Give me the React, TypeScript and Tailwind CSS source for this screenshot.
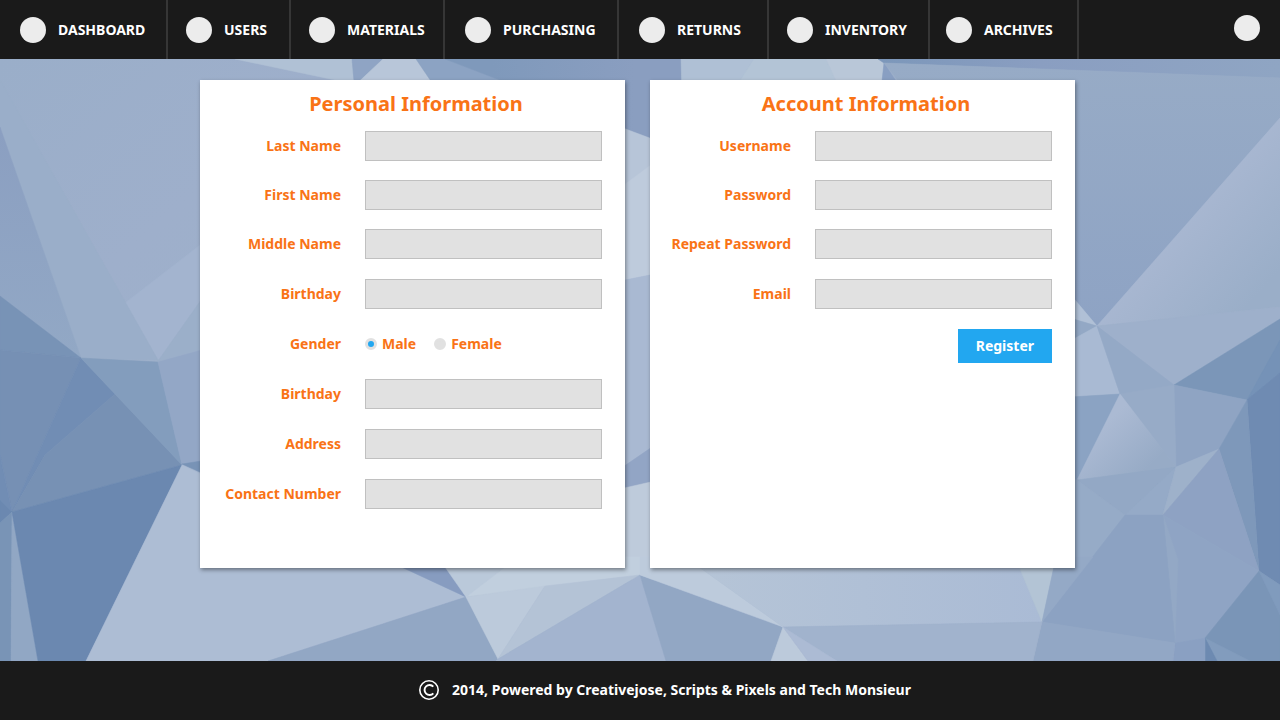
import React from "react";

type Facet = [points: string, color: string];

const facets: Facet[] = [
  // top left
  ["0,59 352,59 354,80 200,245 158,360 0,80", "url(#sky)"],
  ["125,303 200,245 260,200 260,340 158,360", "#a3b4cf"],
  ["0,80 158,360 81,358 0,127", "#9aaec9"],
  ["0,127 81,358 0,296", "url(#leftWedge)"],
  ["0,296 81,358 0,350", "#7893b6"],
  ["158,361 240,245 240,340", "#9bafc9"],
  ["0,350 81,358 12,512 0,455", "#7690b4"],
  ["81,358 115,394 45,455 12,512", "#718db4"],
  ["115,394 182,465 12,512 45,455", "#7791b4"],
  ["81,358 158,362 182,465", "#839dbd"],
  ["158,362 220,345 220,460 182,465", "#93a7c6"],
  ["182,464 220,458 220,481", "#7893b6"],
  ["0,455 12,512 0,500", "#718db4"],
  ["0,500 12,512 0,523", "#6b88b0"],
  ["0,523 12,512 11,661 0,661", "#7994b6"],
  ["12,512 38,661 11,661", "#91a7c4"],
  ["12,512 182,465 86,661 38,661", "#6b88b0"],
  ["182,465 403,568 466,597 268,661 86,661", "#adbdd4"],
  // top strip
  ["235,59 352,59 354,90 335,80", "#b0c1d5"],
  ["352,59 383,59 350,90 354,80", "#8fa4c4"],
  ["383,59 416,59 437,90 350,90", "#b8c6d9"],
  ["416,59 445,59 526,90 437,90", "#8ca3c3"],
  ["445,59 681,59 682,150 650,138 526,90", "url(#topBlue)"],
  ["681,59 754,59 734,90 682,90", "#afc0d5"],
  ["754,59 826,59 840,90 734,90", "#b3c4d6"],
  ["826,59 878,59 884,63 881,90 840,90", "#b9c7d8"],
  ["884,63 902,90 881,90", "#899fc2"],
  ["878,59 1280,59 1280,78 884,63", "url(#topRight)"],
  ["884,63 1280,78 1280,118 1097,326 1060,282", "url(#rightSky)"],
  // centre gap
  ["620,127 655,140 655,274 620,281", "#b7c5d8"],
  ["620,188 655,162 655,274 620,281", "#becbdc"],
  ["620,281 655,274 655,445 620,469", "#a9b9d2"],
  ["620,469 655,445 655,481 620,489", "#92a5c5"],
  ["620,489 655,481 655,580 620,580", "#becbdb"],
  // right side
  ["1097,326 1280,118 1280,307", "url(#shard)"],
  ["1097,326 1280,307 1280,319 1174,385", "#9eb0cb"],
  ["1070,294 1097,326 1070,318", "#b0c0d6"],
  ["1070,318 1097,326 1070,341", "#93a8c5"],
  ["1070,341 1097,326 1120,394 1070,397", "#a9bad3"],
  ["1097,326 1174,385 1120,394", "#94a9c6"],
  ["1174,385 1280,319 1280,373 1247,400", "#7b96b8"],
  ["1280,340 1280,373 1247,400", "#7592b7"],
  ["1280,373 1247,400 1259,571 1280,585", "#6f8bb2"],
  ["1174,385 1247,400 1219,449 1176,467", "#8fa4c3"],
  ["1247,400 1259,571 1219,449", "#7e98ba"],
  ["1120,394 1174,385 1176,467", "#97abc7"],
  ["1070,397 1120,394 1077,480 1070,480", "#8ba3c3"],
  ["1120,394 1176,467 1125,515 1077,480", "url(#gem)"],
  ["1077,480 1176,467 1125,515", "#93a8c5"],
  ["1176,467 1163,515 1125,515", "#95aac7"],
  ["1176,467 1219,449 1163,515", "#9eb1ca"],
  ["1070,478 1077,480 1125,515 1070,588", "#96abc7"],
  ["1219,449 1259,571 1163,515", "#8ea2c3"],
  ["1163,515 1259,571 1205,638 1175,643", "#8fa4c4"],
  ["1163,515 1178,560 1175,643", "#93a8c5"],
  ["1125,515 1163,515 1175,643 1042,622", "#8ca2c2"],
  ["1259,571 1280,585 1280,661 1217,661 1205,638", "#7a95b7"],
  ["1259,571 1280,585 1280,615", "#809bbd"],
  ["1205,638 1250,661 1217,661", "#829cbd"],
  ["1205,638 1217,661 1205,661", "#6d8ab1"],
  ["1175,643 1205,638 1205,661 1173,661", "#8aa0c2"],
  ["1042,622 1175,643 1173,661 1033,661", "#92a7c5"],
  // bottom
  ["380,557 440,557 466,597", "#879cc0"],
  ["268,661 466,597 498,659 496,661", "#92a7c4"],
  ["438,557 518,557 466,597", "#bac9da"],
  ["518,557 640,557 640,575 466,597", "#c1cfde"],
  ["466,597 545,586 498,659", "#bccadb"],
  ["545,586 640,575 498,659", "#b4c3d6"],
  ["498,659 640,575 666,661 496,661", "#a3b4cf"],
  ["640,575 783,627 771,661 666,661", "#92a7c4"],
  ["640,557 685,557 783,627 640,575", "#bdcbdc"],
  ["685,557 1015,557 1042,622 783,627", "url(#lowerPale)"],
  ["1015,557 1056,557 1042,622", "#b3c4d5"],
  ["1056,557 1093,557 1042,622", "#94a9c6"],
  ["783,627 1042,622 1033,661 837,661", "#a1b3cd"],
  ["783,627 808,661 771,661", "#bccadb"],
  ["783,627 837,661 808,661", "#acbbd4"],
];

function Backdrop() {
  return (
    <svg
      className="absolute inset-0 h-full w-full"
      viewBox="0 59 1280 602"
      preserveAspectRatio="xMidYMid slice"
      aria-hidden="true"
    >
      <defs>
        <linearGradient id="sky" x1="0" y1="0" x2="1" y2="1">
          <stop offset="0" stopColor="#9aaec9" />
          <stop offset="0.5" stopColor="#9eafcb" />
          <stop offset="1" stopColor="#9db1ca" />
        </linearGradient>
        <linearGradient id="leftWedge" x1="0" y1="0" x2="0" y2="1">
          <stop offset="0" stopColor="#8b9fc1" />
          <stop offset="1" stopColor="#92a8c5" />
        </linearGradient>
        <linearGradient id="topBlue" x1="0" y1="0" x2="1" y2="0">
          <stop offset="0.2" stopColor="#7f99bb" />
          <stop offset="0.8" stopColor="#8a9ec0" />
        </linearGradient>
        <linearGradient id="topRight" x1="0" y1="0" x2="1" y2="0">
          <stop offset="0" stopColor="#7c97ba" />
          <stop offset="0.4" stopColor="#8a9ec1" />
          <stop offset="1" stopColor="#8fa5c3" />
        </linearGradient>
        <linearGradient id="rightSky" x1="0" y1="0" x2="0" y2="1">
          <stop offset="0" stopColor="#97abc6" />
          <stop offset="1" stopColor="#8ea3c4" />
        </linearGradient>
        <linearGradient id="shard" gradientUnits="userSpaceOnUse" x1="1180" y1="222" x2="1260" y2="292">
          <stop offset="0" stopColor="#a8b7d1" />
          <stop offset="1" stopColor="#9aaec8" />
        </linearGradient>
        <linearGradient id="gem" gradientUnits="userSpaceOnUse" x1="1098" y1="430" x2="1140" y2="475">
          <stop offset="0" stopColor="#abbad3" />
          <stop offset="1" stopColor="#97abc6" />
        </linearGradient>
        <linearGradient id="lowerPale" x1="0" y1="0" x2="1" y2="0">
          <stop offset="0" stopColor="#b6c5d7" />
          <stop offset="1" stopColor="#aabbd5" />
        </linearGradient>
      </defs>
      <rect y="59" width="1280" height="602" fill="#9eb0ca" />
      {facets.map(([points, color]) => (
        <polygon key={points} points={points} fill={color} stroke={color} strokeWidth="0.5" />
      ))}
    </svg>
  );
}

const navItems = [
  { label: "DASHBOARD", className: "w-[168px] pl-5" },
  { label: "USERS", className: "w-[123px] pl-[18px]" },
  { label: "MATERIALS", className: "w-[154px] pl-[18px]" },
  { label: "PURCHASING", className: "w-[174px] pl-5" },
  { label: "RETURNS", className: "w-[150px] pl-5" },
  { label: "INVENTORY", className: "w-[161px] pl-[18px]" },
  { label: "ARCHIVES", className: "w-[149px] pl-4" },
];

type FieldProps = { id: string; label: string; type?: string };

function Field({ id, label, type = "text" }: FieldProps) {
  return (
    <div className="flex items-center gap-6">
      <label htmlFor={id} className="w-[141px] shrink-0 text-right">
        {label}
      </label>
      <input
        id={id}
        name={id}
        type={type}
        className="h-[30px] min-w-0 flex-1 border border-[#c0c0c0] bg-[#e1e1e1] px-2 text-gray-800 outline-none"
      />
    </div>
  );
}

function Radio({ label, defaultChecked }: { label: string; defaultChecked?: boolean }) {
  return (
    <label className="flex items-center gap-[5px]">
      <input
        type="radio"
        name="gender"
        value={label}
        defaultChecked={defaultChecked}
        className="size-3 appearance-none rounded-full border-[3px] border-[#e1e1e1] bg-[#e1e1e1] checked:bg-[#22a7f0]"
      />
      {label}
    </label>
  );
}

function Panel({ title, children }: { title: string; children: React.ReactNode }) {
  return (
    <section className="min-h-[488px] w-[425px] bg-white pt-[10px] pr-[23px] pb-10 shadow-[1px_2px_4px_rgba(0,0,0,0.4)]">
      <h2 className="mb-[13px] pl-[30px] text-center text-xl leading-7 font-bold">{title}</h2>
      {children}
    </section>
  );
}

export default function App() {
  return (
    <div className="flex min-h-screen flex-col font-['Noto_Sans',sans-serif] text-sm font-bold">
      <header className="flex h-[59px] items-stretch bg-[#1a1a1a] text-white">
        <nav className="flex">
          {navItems.map((item) => (
            <a
              key={item.label}
              href="#"
              className={`flex items-center gap-3 border-r-2 border-[#363636] ${item.className}`}
            >
              <span className="size-[26px] shrink-0 rounded-full bg-[#ececec]" />
              {item.label}
            </a>
          ))}
        </nav>
        <div className="mr-5 ml-auto flex items-center pb-1">
          <button type="button" aria-label="Account" className="size-[26px] rounded-full bg-[#ececec]" />
        </div>
      </header>

      <main className="relative flex-1 overflow-hidden py-[21px]">
        <Backdrop />
        <form
          className="relative mx-auto flex max-w-[880px] flex-wrap gap-[25px] text-[#f97316]"
          onSubmit={(e) => e.preventDefault()}
        >
          <Panel title="Personal Information">
            <div className="flex flex-col gap-5">
              <div className="flex flex-col gap-[19px]">
                <Field id="last-name" label="Last Name" />
                <Field id="first-name" label="First Name" />
                <Field id="middle-name" label="Middle Name" />
              </div>
              <Field id="birthday" label="Birthday" />
              <div role="radiogroup" aria-labelledby="gender-label" className="flex h-[30px] items-center gap-6">
                <span id="gender-label" className="w-[141px] text-right">
                  Gender
                </span>
                <div className="flex gap-[18px]">
                  <Radio label="Male" defaultChecked />
                  <Radio label="Female" />
                </div>
              </div>
              <Field id="birthday-2" label="Birthday" />
              <Field id="address" label="Address" />
              <Field id="contact-number" label="Contact Number" type="tel" />
            </div>
          </Panel>

          <Panel title="Account Information">
            <div className="flex flex-col gap-5">
              <div className="flex flex-col gap-[19px]">
                <Field id="username" label="Username" />
                <Field id="password" label="Password" type="password" />
                <Field id="repeat-password" label="Repeat Password" type="password" />
              </div>
              <Field id="email" label="Email" type="email" />
              <button type="submit" className="h-[34px] self-end bg-[#22a7f0] px-[18px] text-white">
                Register
              </button>
            </div>
          </Panel>
        </form>
      </main>

      <footer className="flex h-[59px] items-center justify-center gap-[13px] bg-[#1a1a1a] pb-[2px] pl-[50px] text-white">
        <svg className="size-5" viewBox="0 0 20 20" fill="none" stroke="currentColor" aria-hidden="true">
          <circle cx="10" cy="10" r="9.2" strokeWidth="1.6" />
          <path d="M14.3 6.7A5 5 0 1 0 14.3 13.3" strokeWidth="1.9" />
        </svg>
        <p>2014, Powered by Creativejose, Scripts &amp; Pixels and Tech Monsieur</p>
      </footer>
    </div>
  );
}
